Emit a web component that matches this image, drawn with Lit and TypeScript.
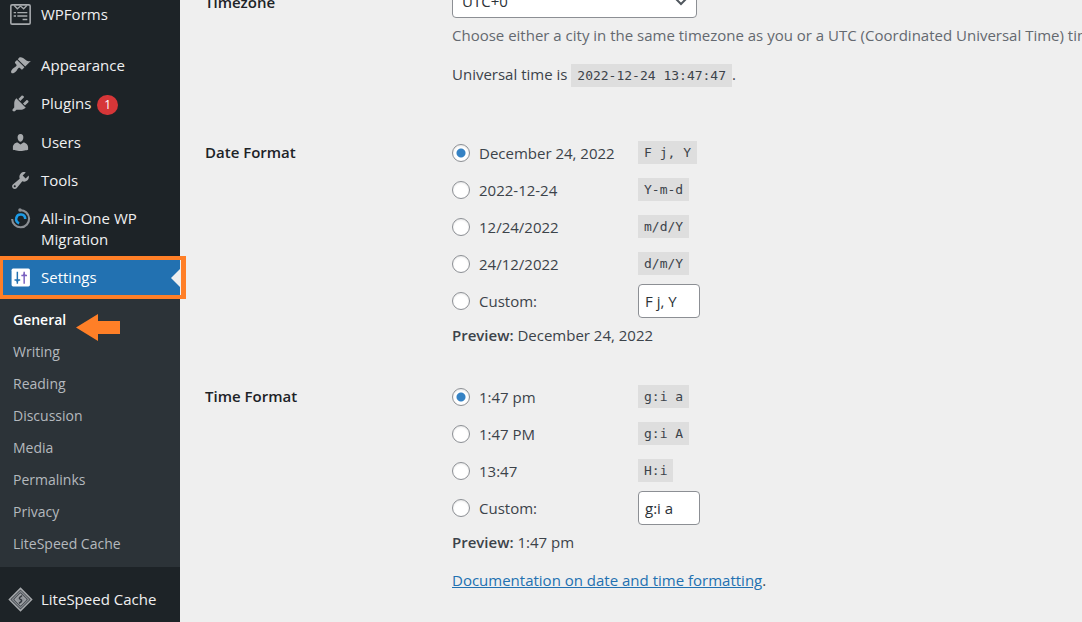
import { LitElement, html, css, svg, nothing } from "lit";
import { customElement, state } from "lit/decorators.js";

const icons = {
  forms: svg`<g fill="none" stroke="#a7aaad"><rect x="0.8" y="0.8" width="18.400" height="18.400" rx="1.200" stroke-width="1.500"/><path d="M4 1.500l3 3 3-2.500 3 2.500 3-3" stroke-width="1.300"/><path d="M3.500 8.200h2.200M7 8.200h9.500M3.500 11.400h2.200M7 11.400h9.500M12 14.800h4.500" stroke-width="1.300"/></g>`,
  appearance: svg`<path d="M14.48 11.06L7.41 3.99l1.5-1.5c.5-.56 2.3-.47 3.51.32 1.21.8 1.43 1.28 2.91 2.1 1.18.64 2.45 1.26 4.45.85zm-.71.71L6.7 4.7 4.93 6.47c-.39.39-.39 1.02 0 1.41l1.06 1.06c.39.39.39 1.03 0 1.42-.6.6-1.43 1.11-2.21 1.69-.35.26-.7.53-1.01.84C1.43 14.23.4 16.08 1.4 17.07c.99 1 2.84-.03 4.18-1.36.31-.31.58-.66.85-1.02.57-.78 1.08-1.61 1.69-2.21.39-.39 1.02-.39 1.41 0l1.06 1.06c.39.39 1.02.39 1.41 0z"/>`,
  plugins: svg`<path d="M13.11 4.36L9.87 7.6 8 5.73l3.24-3.24c.35-.34 1.05-.2 1.56.32.52.51.66 1.21.31 1.55zm-8 1.77l.91-1.12 9.01 9.01-1.19.84c-.71.71-2.63 1.16-3.82 1.16H6.14L4.9 17.26c-.59.59-1.54.59-2.12 0-.59-.58-.59-1.53 0-2.12l1.24-1.24v-3.88c0-1.13.4-3.19 1.09-3.89zm7.26 3.97l3.24-3.24c.34-.35 1.04-.21 1.55.31.52.51.66 1.21.31 1.55l-3.24 3.25z"/>`,
  users: svg`<path d="M10 9.25c-2.27 0-2.73-3.44-2.73-3.44C7 4.02 7.82 2 9.97 2c2.16 0 2.98 2.02 2.71 3.81 0 0-.41 3.44-2.68 3.44zm0 2.57L12.72 10c2.39 0 4.52 2.33 4.52 4.53v2.49s-3.65 1.13-7.24 1.13c-3.65 0-7.24-1.13-7.24-1.13v-2.49c0-2.25 1.94-4.48 4.47-4.48z"/>`,
  tools: svg`<path d="M16.68 9.77c-1.34 1.34-3.3 1.67-4.95.99l-5.41 6.52c-.99.99-2.59.99-3.58 0s-.99-2.59 0-3.57l6.52-5.42c-.68-1.65-.35-3.61.99-4.95 1.28-1.28 3.12-1.62 4.72-1.06l-2.89 2.89 2.82 2.82 2.86-2.87c.53 1.58.18 3.39-1.08 4.65zM3.81 16.21c.4.39 1.04.39 1.43 0 .4-.4.4-1.04 0-1.43-.39-.4-1.03-.4-1.43 0-.39.39-.39 1.03 0 1.43z"/>`,
  migration: svg`<g fill="none"><path d="M9.500 2.200a8.100 8.100 0 1 1-7.500 8.300" stroke="#8b8f94" stroke-width="2"/><path d="M8.700 14.500A4.300 4.300 0 1 1 14.500 10.500" stroke="#1c9be6" stroke-width="2.400"/></g><circle cx="9.500" cy="1.900" r="1.700" fill="#8b8f94"/>`,
  settings: svg`<rect x="1.500" y="1.500" width="17.500" height="17" rx="1.500" fill="#fff"/><g fill="none" stroke-width="1.400"><path d="M7 4.500v11.500M4.300 12.300h5.400" stroke="#2271b1"/><path d="M5.300 12.500h3.400L7 14.800z" fill="#2271b1" stroke="none"/><path d="M13.500 4.500v11.500M10.800 8h5.400" stroke="#7b62c0"/><path d="M11.800 8h3.400l-1.700-2.500z" fill="#7b62c0" stroke="none"/></g>`,
  litespeed: svg`<g fill="none" stroke="#a7aaad"><path d="M10-.6L20.600 10 10 20.600-.6 10z" fill="#3d4248" stroke-width="1.400"/><path d="M10 2.200l7.800 7.800-7.800 7.800-7.800-7.800z" stroke="#85898e" stroke-width="1.200"/><path d="M10 4.800l5.200 5.200-5.200 5.200L4.800 10z" fill="#8f9398"/><path d="M11.500 6.300C7 9 9.500 9.500 10.200 10s2.300 1-1.700 3.700" stroke="#33383e" stroke-width="1.300"/></g>`,
};

type Item = { label: string; icon: keyof typeof icons; badge?: number };

const upper: Item[] = [
  { label: "Appearance", icon: "appearance" },
  { label: "Plugins", icon: "plugins", badge: 1 },
  { label: "Users", icon: "users" },
  { label: "Tools", icon: "tools" },
  { label: "All-in-One WP Migration", icon: "migration" },
];
const submenu = ["General", "Writing", "Reading", "Discussion", "Media", "Permalinks", "Privacy", "LiteSpeed Cache"];

@customElement("admin-menu")
class AdminMenu extends LitElement {
  static styles = css`
    :host { display: block; background: #1d2327; color: #f0f0f1; font-size: 15px; line-height: 21px; }
    a { color: inherit; text-decoration: none; }
    ul { list-style: none; margin: 0; padding: 0; }
    .first { margin: -5px 0 13px; }
    .item { display: flex; padding: 9px 20px 8px 10px; gap: 10px; }
    .icon { width: 21px; height: 21px; flex: none; fill: #a7aaad; overflow: visible; }
    .badge { display: inline-block; min-width: 21px; height: 20px; margin-left: 2px; border-radius: 10px; background: #d63638; color: #fff; font-size: 12px; line-height: 20px; text-align: center; }
    .current { position: relative; margin-top: -1px; background: #2271b1; color: #fff; padding-bottom: 11px; padding-top: 10px; }
    .current::before { content: ""; position: absolute; right: 0; top: 12px; border: 9px solid transparent; border-left: 0; border-right-color: #efefef; }
    .current::after { content: ""; position: absolute; inset: -1px -6px 0 -1px; border: 4px solid #ff7f27; border-right-width: 5px; z-index: 1; }
    .sub { position: relative; background: #2c3338; padding: 5px 0 7px; color: #b4b9be; font-size: 14px; line-height: 22px; }
    .sub a { display: block; padding: 5px 13px; }
    .sub .active { color: #fff; font-weight: 600; }
    .pointer { position: absolute; left: 76px; top: 15px; width: 44px; height: 27px; fill: #ff7f27; }
    .last { padding-top: 13px; }
  `;

  private item(i: Item, current = false) {
    return html`<a class="item ${current ? "current" : ""}" href="#">
      <svg class="icon" viewBox="0 0 20 20" aria-hidden="true">${icons[i.icon]}</svg>
      <span>${i.label}${i.badge ? html` <span class="badge">${i.badge}</span>` : nothing}</span>
    </a>`;
  }

  render() {
    return html`<nav aria-label="Main menu">
      <div class="first">${this.item({ label: "WPForms", icon: "forms" })}</div>
      <ul>
        ${upper.map((i) => html`<li>${this.item(i)}</li>`)}
        <li>
          ${this.item({ label: "Settings", icon: "settings" }, true)}
          <div class="sub">
            <ul>
              ${submenu.map((s, n) => html`<li><a class=${n === 0 ? "active" : ""} href="#">${s}</a></li>`)}
            </ul>
            <svg class="pointer" viewBox="0 0 44 27" aria-hidden="true"><path d="M0 13.500L22 0v7h22v13H22v7z"/></svg>
          </div>
        </li>
      </ul>
      <div class="last">${this.item({ label: "LiteSpeed Cache", icon: "litespeed" })}</div>
    </nav>`;
  }
}

type Choice = [label: string, code: string];

@customElement("app-root")
class AppRoot extends LitElement {
  static styles = css`
    :host { display: grid; grid-template-columns: 180px minmax(0, 1fr); height: 100vh; overflow: hidden; background: #efefef; color: #3c434a; font: 15px/22px "Open Sans", "Noto Sans", sans-serif; }
    admin-menu { position: relative; z-index: 1; }
    main { min-width: 0; overflow: hidden; padding-left: 25px; }
    form { margin-top: -16px; }
    .row { display: grid; grid-template-columns: 247px minmax(0, 1fr); }
    .heading { margin: 0; color: #1d2327; font-weight: 600; font-size: 15px; line-height: 22px; padding-top: 7px; }
    p { margin: 0; white-space: nowrap; }
    fieldset { border: 0; margin: 0; padding: 0; min-width: 0; }
    .picker { display: block; position: relative; width: 245px; }
    select { appearance: none; box-sizing: border-box; width: 100%; height: 34px; padding: 0 24px 0 9px; border: 1px solid #8c8f94; border-radius: 4px; background: #fff; color: #2c3338; font: inherit; }
    .chevron { position: absolute; right: 9px; top: 13px; width: 14px; height: 10px; fill: none; stroke: #50575e; stroke-width: 2; }
    .hint { margin-top: 6px; color: #646970; }
    .utc { margin-top: 17px; }
    code { display: inline-block; padding: 0 6px; background: #dedede; font: 13px/23px "DejaVu Sans Mono", monospace; }
    .formats { margin-top: 47px; }
    .times { margin-top: 32px; }
    .choice { display: grid; grid-template-columns: 186px auto; justify-content: start; align-items: center; height: 37px; }
    .option { display: flex; align-items: center; gap: 9px; }
    .value { justify-self: start; }
    .radio { appearance: none; flex: none; box-sizing: border-box; width: 18px; height: 18px; margin: 0; border: 1px solid #8c8f94; border-radius: 50%; background: #fff; box-shadow: inset 0 1px 2px rgba(0, 0, 0, 0.1); }
    .radio:checked { background: radial-gradient(circle, #3582c4 4px, #fff 5px); }
    .custom { box-sizing: border-box; width: 62px; height: 34px; padding: 0 6px; border: 1px solid #8c8f94; border-radius: 4px; background: #fff; color: #2c3338; font: inherit; }
    .preview { margin-top: 5px; }
    strong { font-weight: 600; }
    .docs { margin-top: 16px; }
    .docs a { color: #2271b1; }
  `;

  @state() private picked: Record<string, number> = { date: 0, time: 0 };

  private choices(name: string, legend: string, list: Choice[], custom: string) {
    const radio = (n: number) => html`<input class="radio" type="radio" name=${name} .checked=${this.picked[name] === n}
      @change=${() => (this.picked = { ...this.picked, [name]: n })} />`;
    return html`<fieldset aria-label=${legend}>
      ${list.map(([label, code], n) => html`<label class="choice"><span class="option">${radio(n)}${label}</span><code class="value">${code}</code></label>`)}
      <div class="choice">
        <label class="option">${radio(list.length)}Custom:</label>
        <input class="custom" type="text" aria-label="Custom ${legend}" .value=${custom} />
      </div>
    </fieldset>`;
  }

  render() {
    return html`
      <admin-menu></admin-menu>
      <main>
        <form>
          <div class="row">
            <label class="heading" for="timezone">Timezone</label>
            <div>
              <span class="picker">
                <select id="timezone"><option>UTC+0</option></select>
                <svg class="chevron" viewBox="0 0 14 10" aria-hidden="true"><path d="M2 2l5 5 5-5"/></svg>
              </span>
              <p class="hint">Choose either a city in the same timezone as you or a UTC (Coordinated Universal Time) time offset.</p>
              <p class="utc">Universal time is <code>2022-12-24 13:47:47</code>.</p>
            </div>
          </div>
          <div class="row formats">
            <h2 class="heading">Date Format</h2>
            <div>
              ${this.choices("date", "Date Format", [["December 24, 2022", "F j, Y"], ["2022-12-24", "Y-m-d"], ["12/24/2022", "m/d/Y"], ["24/12/2022", "d/m/Y"]], "F j, Y")}
              <p class="preview"><strong>Preview:</strong> December 24, 2022</p>
            </div>
          </div>
          <div class="row times">
            <h2 class="heading">Time Format</h2>
            <div>
              ${this.choices("time", "Time Format", [["1:47 pm", "g:i a"], ["1:47 PM", "g:i A"], ["13:47", "H:i"]], "g:i a")}
              <p class="preview"><strong>Preview:</strong> 1:47 pm</p>
              <p class="docs"><a href="#">Documentation on date and time formatting</a>.</p>
            </div>
          </div>
        </form>
      </main>`;
  }
}
